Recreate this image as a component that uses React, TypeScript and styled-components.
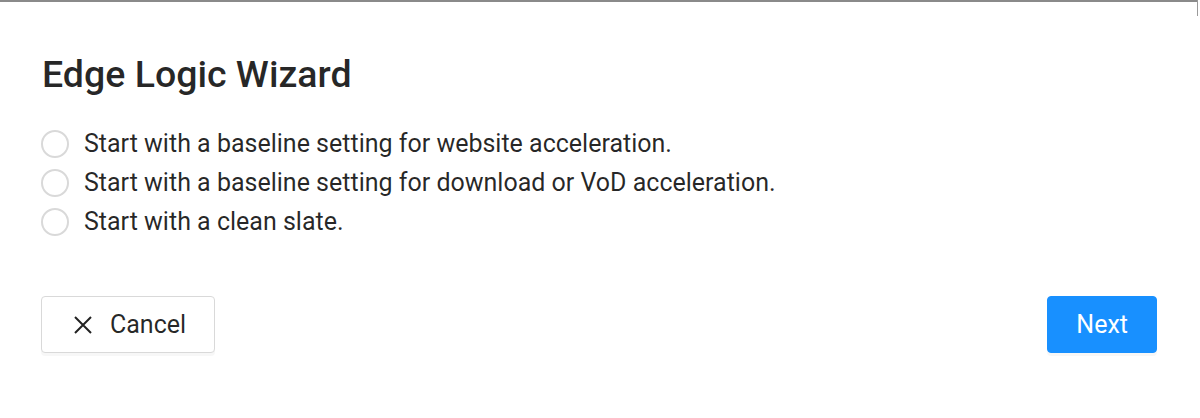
import React, { useState } from "react";
import styled, { createGlobalStyle } from "styled-components";

const Global = createGlobalStyle`
  html, body { margin: 0; padding: 0; background: #fff; }
  body { font-family: Roboto, "Liberation Sans", Arial, sans-serif; color: rgba(0,0,0,0.85); }
`;

const Page = styled.div`
  width: 1200px;
  height: 418px;
  box-sizing: border-box;
  position: relative;
  overflow: hidden;
  background: #fff;
`;

const TopEdge = styled.div`
  height: 2px;
  background: #8a8a8a;
  overflow: hidden;
  display: flex;
  align-items: flex-end;
  margin-right: 2px;
`;

const ClippedText = styled.span`
  font-size: 22px;
  line-height: 22px;
  color: #222;
  white-space: nowrap;
  transform: translateY(-15px);
  display: block;
`;

const SideEdge = styled.div`
  position: absolute;
  top: 0;
  right: 2px;
  width: 1px;
  height: 16px;
  background: #9a9a9a;
`;

const Body = styled.div`
  padding: 50px 43px 0 41px;
  display: flex;
  flex-direction: column;
`;

const Title = styled.h1`
  margin: 0 0 0 1px;
  font-size: 37.5px;
  line-height: 44px;
  font-weight: 500;
  color: rgba(0,0,0,0.85);
`;

const Options = styled.div`
  margin-top: 28px;
  display: flex;
  flex-direction: column;
`;

const Option = styled.label`
  display: flex;
  align-items: center;
  height: 39px;
  gap: 15px;
  cursor: pointer;
  font-size: 25px;
  color: rgba(0,0,0,0.85);
`;

const Circle = styled.span<{ $checked: boolean }>`
  width: 28px;
  height: 28px;
  box-sizing: border-box;
  border-radius: 50%;
  border: 2px solid ${(p) => (p.$checked ? "#1890ff" : "#d9d9d9")};
  background: #fff;
  display: flex;
  align-items: center;
  justify-content: center;
  flex: none;
  &::after {
    content: "";
    width: 14px;
    height: 14px;
    border-radius: 50%;
    background: #1890ff;
    display: ${(p) => (p.$checked ? "block" : "none")};
  }
`;

const Footer = styled.div`
  margin-top: 55px;
  display: flex;
  justify-content: space-between;
  align-items: center;
`;

const Button = styled.button<{ $primary?: boolean }>`
  height: 57px;
  padding: 0 ${(p) => (p.$primary ? "28px 0 28px" : "28px 0 32px")};
  border-radius: 4px;
  font-family: Roboto, "Liberation Sans", Arial, sans-serif;
  font-size: 25px;
  display: flex;
  align-items: center;
  gap: 18px;
  cursor: pointer;
  border: 1px solid ${(p) => (p.$primary ? "#1890ff" : "#d9d9d9")};
  background: ${(p) => (p.$primary ? "#1890ff" : "#fff")};
  color: ${(p) => (p.$primary ? "#fff" : "rgba(0,0,0,0.85)")};
  box-shadow: 0 3px 0 rgba(0,0,0,0.03);
`;

const options = [
  "Start with a baseline setting for website acceleration.",
  "Start with a baseline setting for download or VoD acceleration.",
  "Start with a clean slate.",
];

export default function App() {
  const [sel, setSel] = useState<number | null>(null);
  return (
    <Page>
      <Global />
      <TopEdge>
        <ClippedText>Create a new version of this configuration</ClippedText>
      </TopEdge>
      <SideEdge />
      <Body>
        <Title>Edge Logic Wizard</Title>
        <Options>
          {options.map((o, i) => (
            <Option key={i} onClick={() => setSel(i)}>
              <Circle $checked={sel === i} />
              {o}
            </Option>
          ))}
        </Options>
        <Footer>
          <Button>
            <svg width="18" height="18" viewBox="0 0 18 18" fill="none" stroke="#222" strokeWidth="2">
              <path d="M1 1L17 17M17 1L1 17" />
            </svg>
            Cancel
          </Button>
          <Button $primary>Next</Button>
        </Footer>
      </Body>
    </Page>
  );
}
